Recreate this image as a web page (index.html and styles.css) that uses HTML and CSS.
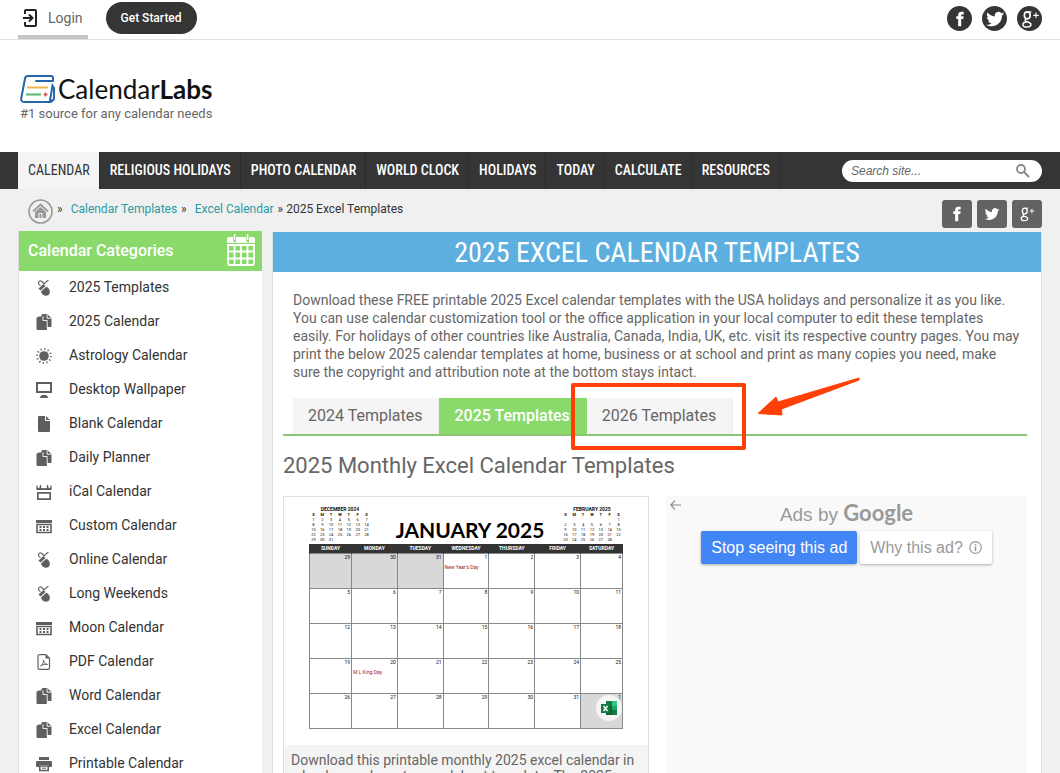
FILE: index.html
```html
<!DOCTYPE html>
<html lang="en">
<head>
  <meta charset="utf-8">
  <meta name="viewport" content="width=device-width, initial-scale=1">
  <title>2025 Excel Calendar Templates - CalendarLabs</title>
  <link rel="stylesheet" href="styles.css">
</head>
<body>
  <!-- icon sprite -->
  <svg class="sprite" aria-hidden="true">
    <symbol id="i-mouse" viewBox="0 0 16 16">
      <path d="M4.500 5.500C2 5 2 1.500 4 1s2.500 2 4 2.500 2-3 4.500-3" fill="none" stroke="#5f5f5f" stroke-width="1.200"/>
      <path d="M2.500 8.500l5-4.500 2 2-5 4.500z" fill="#5f5f5f"/>
      <path d="M5 11.500l5.200-4.800c2.300.8 4 3 3.600 5.800-.4 2.300-2.300 3.500-4.300 3.300C7.300 15.500 5.500 13.800 5 11.500z" fill="#5f5f5f"/>
    </symbol>
    <symbol id="i-docs" viewBox="0 0 16 16">
      <path d="M5 2l1.500-2H11l4.500 4v8q0 1-1 1H10z" fill="#5f5f5f"/>
      <path d="M3 2.500h4l4 4V15q0 1-1 1H1.500q-1 0-1-1V4.500q0-1 1-1.500z" fill="#5f5f5f"/>
      <path d="M7 2.300v4.200h4.200V14M11 .5v3.700h4.500" fill="none" stroke="#fff" stroke-width=".9"/>
    </symbol>
    <symbol id="i-sun" viewBox="0 0 16 16">
      <circle cx="8" cy="8" r="4.800" fill="#5f5f5f"/>
      <circle cx="8" cy="8" r="7" fill="none" stroke="#5f5f5f" stroke-width="2" stroke-dasharray="1.200 2.465"/>
    </symbol>
    <symbol id="i-screen" viewBox="0 0 16 16">
      <path d="M1 1h14v9H1z" fill="none" stroke="#5f5f5f" stroke-width="2"/>
      <path d="M6 13h4l2 2v1H4v-1z" fill="#5f5f5f"/>
    </symbol>
    <symbol id="i-page" viewBox="0 0 16 16">
      <path d="M3 0h7l4 4v11q0 1-1 1H3q-1 0-1-1V1q0-1 1-1z" fill="#5f5f5f"/>
      <path d="M9.500 0v4.500H14" fill="none" stroke="#fff" stroke-width="1"/>
    </symbol>
    <symbol id="i-ical" viewBox="0 0 16 16">
      <path d="M1 1.500V5h14V1.500M4.500 1v3M11.500 1v3" fill="none" stroke="#5f5f5f" stroke-width="1.300"/>
      <path d="M1 5l3-2 2 1.500h4L12 3l3 2v1H1z" fill="#5f5f5f"/>
      <path d="M1.800 8.800h12.400v6.400H1.800z" fill="none" stroke="#5f5f5f" stroke-width="1.700"/>
    </symbol>
    <symbol id="i-grid" viewBox="0 0 16 16">
      <path d="M0 2h16v3H0z" fill="#5f5f5f"/>
      <path d="M1 6.500h14v8H1z" fill="none" stroke="#5f5f5f" stroke-width="1.600"/>
      <path d="M3.500 9h9M3.500 12h9" stroke="#5f5f5f" stroke-width="2" stroke-dasharray="2 1.500"/>
    </symbol>
    <symbol id="i-pdf" viewBox="0 0 16 16">
      <path d="M3 .7h7l3.500 3.500V14q0 1.300-1.300 1.300H3.500Q2 15.300 2 14V2Q2 .7 3.300 .7z" fill="none" stroke="#5f5f5f" stroke-width="1.200"/>
      <path d="M9.500 1v3.500h4z" fill="#5f5f5f"/>
      <path d="M4.500 12c2-1 3-3.500 3-6 0 2.500 1.500 4 4 4.500-2.500-.5-5 0-7 1.500z" fill="none" stroke="#5f5f5f" stroke-width="1"/>
    </symbol>
    <symbol id="i-print" viewBox="0 0 16 16">
      <path d="M3 1h10v3H3zM1 5h14q1 0 1 1v4q0 1-1 1h-2V9H3v2H1q-1 0-1-1V6q0-1 1-1z" fill="#5f5f5f"/>
      <path d="M3.800 10h8.400v4.500H3.800z" fill="none" stroke="#5f5f5f" stroke-width="1.600"/>
      <path d="M6 12.200h4" stroke="#5f5f5f"/>
    </symbol>
    <symbol id="i-fb" viewBox="0 0 24 24">
      <path d="M10 20v-8H8V9h2V7.500C10 5 11.300 4 13.500 4H16v3h-1.500C13.500 7 13.300 7.500 13.300 8.200V9H16l-.4 3h-2.300v8z" fill="#fff"/>
    </symbol>
    <symbol id="i-tw" viewBox="0 0 24 24">
      <path d="M22 6.200c-.8.300-1.500.5-2.300.6.800-.5 1.500-1.300 1.700-2.200-.8.500-1.600.8-2.500 1a4 4 0 0 0-6.900 3.700C8.700 9.100 5.700 7.500 3.700 5c-1 1.800-.6 4.100 1.200 5.300-.6 0-1.200-.2-1.800-.5 0 1.900 1.400 3.600 3.200 4-.6.200-1.200.2-1.800.1.500 1.600 2 2.700 3.700 2.700-1.600 1.300-3.700 1.900-5.900 1.600 7.700 4.500 17.400-.4 17.400-9.900.9-.6 1.700-1.300 2.300-2.100z" fill="#fff"/>
    </symbol>
    <symbol id="i-gp" viewBox="0 0 24 24">
      <path d="M13.500 4.300H9.500" stroke="#fff" stroke-width="1.400"/>
      <ellipse cx="9" cy="8" rx="3.200" ry="3.800" fill="none" stroke="#fff" stroke-width="1.800"/>
      <path d="M8 12c-2 1-1.500 2.300 0 2.800 2 .6 5 1 5 3.200 0 1.900-2 2.800-4.500 2.800s-4.300-.9-4.300-2.600 2-3 4.500-3" fill="none" stroke="#fff" stroke-width="1.600"/>
      <path d="M15.500 8h6M18.500 5v6" stroke="#fff" stroke-width="1.200"/>
    </symbol>
  </svg>

  <div class="page">
    <header class="top-bar">
      <a class="login" href="#">
        <svg width="15" height="18" viewBox="0 0 15 18" aria-hidden="true">
          <path d="M2 5V2q0-1 1-1h9q1 0 1 1v14q0 1-1 1H3q-1 0-1-1v-3M0 9h9M6 5.500L9.500 9 6 12.500" fill="none" stroke="#222" stroke-width="2"/>
        </svg>
        Login
      </a>
      <a class="get-started" href="#">Get Started</a>
      <div class="round-social">
        <a href="#" aria-label="Facebook"><svg><use href="#i-fb"/></svg></a>
        <a href="#" aria-label="Twitter"><svg><use href="#i-tw"/></svg></a>
        <a href="#" aria-label="Google Plus"><svg><use href="#i-gp"/></svg></a>
      </div>
    </header>

    <div class="brand">
      <a class="logo" href="#">
        <svg width="36" height="28" viewBox="0 0 36 28" aria-hidden="true">
          <path d="M33 6.500V3q0-2-2-2H8Q5.500 1 5 3.500L1.300 23q-.6 4 3 4H30q2 0 2.500-2" fill="none" stroke="#2467ab" stroke-width="2"/>
          <path d="M33 6H16M32.500 10.500L30 25.500q4 .5 4-2V13z" fill="none" stroke="#2467ab" stroke-width="2" stroke-linecap="round"/>
          <path d="M7 12.500h21" stroke="#f0b44a" stroke-width="2"/>
          <path d="M6 19.500h15" stroke="#55b374" stroke-width="2"/>
          <path d="M23.500 19.500h4M25.500 17.500v4" stroke="#e5483a" stroke-width="1.500"/>
        </svg>
        <span>Calendar<b>Labs</b></span>
      </a>
      <p class="tagline">#1 source for any calendar needs</p>
    </div>

    <nav class="main-nav">
      <ul>
        <li><a class="active" href="#">CALENDAR</a></li>
        <li><a href="#">RELIGIOUS HOLIDAYS</a></li>
        <li><a href="#">PHOTO CALENDAR</a></li>
        <li><a href="#">WORLD CLOCK</a></li>
        <li><a href="#">HOLIDAYS</a></li>
        <li><a href="#">TODAY</a></li>
        <li><a href="#">CALCULATE</a></li>
        <li><a href="#">RESOURCES</a></li>
      </ul>
      <form class="search">
        <input type="text" placeholder="Search site..." aria-label="Search site">
        <button type="button" aria-label="Search">
          <svg width="14" height="14" viewBox="0 0 14 14"><circle cx="5" cy="5" r="4" fill="none" stroke="#888" stroke-width="1.800"/><path d="M8 8l5 5" stroke="#888" stroke-width="2"/></svg>
        </button>
      </form>
    </nav>

    <div class="crumb-bar">
      <div class="crumbs">
        <a class="home" href="#" aria-label="Home">
          <svg width="25" height="25" viewBox="0 0 25 25"><circle cx="12.500" cy="12.500" r="11.500" fill="none" stroke="#999" stroke-width="1.600"/><path d="M5 12.500l7.500-7 7.500 7" fill="none" stroke="#999" stroke-width="1.800"/><path d="M7 13l5.500-5 5.500 5v6h-3.500v-5h-4v5H7zM11.500 15h2v4h-2z" fill="#999"/></svg>
        </a>
        <span>»</span>
        <a href="#">Calendar Templates</a>
        <span>»</span>
        <a href="#">Excel Calendar</a>
        <span>» 2025 Excel Templates</span>
      </div>
      <div class="square-social">
        <a href="#" aria-label="Facebook"><svg><use href="#i-fb"/></svg></a>
        <a href="#" aria-label="Twitter"><svg><use href="#i-tw"/></svg></a>
        <a href="#" aria-label="Google Plus"><svg><use href="#i-gp"/></svg></a>
      </div>
    </div>

    <div class="columns">
      <aside class="sidebar">
        <h2>Calendar Categories
          <svg width="28" height="32" viewBox="0 0 28 32" aria-hidden="true">
            <path d="M0 9V5q0-2 2-2h24q2 0 2 2v4z" fill="#fff"/>
            <path d="M7.500 1v4q0 2 1.500 2M20.500 1v4q0 2 1.500 2" fill="none" stroke="#8ad96b" stroke-width="3"/>
            <path d="M7.500 0v6M20.500 0v6" stroke="#fff" stroke-width="1.600"/>
            <path d="M1 11h26v18q0 2-2 2H3q-2 0-2-2zM7.500 11v20M14 11v20M20.500 11v20M1 17.500h26M1 24.500h26" fill="none" stroke="#fff" stroke-width="1.800"/>
          </svg>
        </h2>
        <ul>
          <li><a href="#"><svg><use href="#i-mouse"/></svg>2025 Templates</a></li>
          <li><a href="#"><svg><use href="#i-docs"/></svg>2025 Calendar</a></li>
          <li><a href="#"><svg><use href="#i-sun"/></svg>Astrology Calendar</a></li>
          <li><a href="#"><svg><use href="#i-screen"/></svg>Desktop Wallpaper</a></li>
          <li><a href="#"><svg><use href="#i-page"/></svg>Blank Calendar</a></li>
          <li><a href="#"><svg><use href="#i-docs"/></svg>Daily Planner</a></li>
          <li><a href="#"><svg><use href="#i-ical"/></svg>iCal Calendar</a></li>
          <li><a href="#"><svg><use href="#i-grid"/></svg>Custom Calendar</a></li>
          <li><a href="#"><svg><use href="#i-mouse"/></svg>Online Calendar</a></li>
          <li><a href="#"><svg><use href="#i-mouse"/></svg>Long Weekends</a></li>
          <li><a href="#"><svg><use href="#i-grid"/></svg>Moon Calendar</a></li>
          <li><a href="#"><svg><use href="#i-pdf"/></svg>PDF Calendar</a></li>
          <li><a href="#"><svg><use href="#i-docs"/></svg>Word Calendar</a></li>
          <li><a href="#"><svg><use href="#i-docs"/></svg>Excel Calendar</a></li>
          <li><a href="#"><svg><use href="#i-print"/></svg>Printable Calendar</a></li>
        </ul>
      </aside>

      <main class="content">
        <h1>2025 EXCEL CALENDAR TEMPLATES</h1>
        <p class="intro">Download these FREE printable 2025 Excel calendar templates with the USA holidays and personalize it as you like. You can use calendar customization tool or the office application in your local computer to edit these templates easily. For holidays of other countries like Australia, Canada, India, UK, etc. visit its respective country pages. You may print the below 2025 calendar templates at home, business or at school and print as many copies you need, make sure the copyright and attribution note at the bottom stays intact.</p>

        <div class="tabs">
          <a href="#">2024 Templates</a>
          <a class="active" href="#">2025 Templates</a>
          <a href="#">2026 Templates
            <span class="highlight"></span>
            <svg class="arrow" width="104" height="40" viewBox="0 0 104 40" aria-hidden="true"><path d="M102 1L21 25 19 20 1 36.500 25 38 24.500 32 102 3z" fill="#ff4006" stroke="#ff4006" stroke-linejoin="round"/></svg>
          </a>
        </div>

        <h2>2025 Monthly Excel Calendar Templates</h2>

        <div class="cards">
          <article class="card">
            <div class="sheet">
              <div class="sheet-head">
                <table class="mini">
                  <caption>DECEMBER 2024</caption>
                  <tr><th>S</th><th>M</th><th>T</th><th>W</th><th>T</th><th>F</th><th>S</th></tr>
                  <tr><td>1</td><td>2</td><td>3</td><td>4</td><td>5</td><td>6</td><td>7</td></tr>
                  <tr><td>8</td><td>9</td><td>10</td><td>11</td><td>12</td><td>13</td><td>14</td></tr>
                  <tr><td>15</td><td>16</td><td>17</td><td>18</td><td>19</td><td>20</td><td>21</td></tr>
                  <tr><td>22</td><td>23</td><td>24</td><td>25</td><td>26</td><td>27</td><td>28</td></tr>
                  <tr><td>29</td><td>30</td><td>31</td><td></td><td></td><td></td><td></td></tr>
                </table>
                <h3>JANUARY 2025</h3>
                <table class="mini">
                  <caption>FEBRUARY 2025</caption>
                  <tr><th>S</th><th>M</th><th>T</th><th>W</th><th>T</th><th>F</th><th>S</th></tr>
                  <tr><td></td><td></td><td></td><td></td><td></td><td></td><td>1</td></tr>
                  <tr><td>2</td><td>3</td><td>4</td><td>5</td><td>6</td><td>7</td><td>8</td></tr>
                  <tr><td>9</td><td>10</td><td>11</td><td>12</td><td>13</td><td>14</td><td>15</td></tr>
                  <tr><td>16</td><td>17</td><td>18</td><td>19</td><td>20</td><td>21</td><td>22</td></tr>
                  <tr><td>23</td><td>24</td><td>25</td><td>26</td><td>27</td><td>28</td><td></td></tr>
                </table>
              </div>
              <table class="month">
                <tr><th>SUNDAY</th><th>MONDAY</th><th>TUESDAY</th><th>WEDNESDAY</th><th>THURSDAY</th><th>FRIDAY</th><th>SATURDAY</th></tr>
                <tr><td class="out">29</td><td class="out">30</td><td class="out">31</td><td>1<span>New Year's Day</span></td><td>2</td><td>3</td><td>4</td></tr>
                <tr><td>5</td><td>6</td><td>7</td><td>8</td><td>9</td><td>10</td><td>11</td></tr>
                <tr><td>12</td><td>13</td><td>14</td><td>15</td><td>16</td><td>17</td><td>18</td></tr>
                <tr><td>19</td><td>20<span>M L King Day</span></td><td>21</td><td>22</td><td>23</td><td>24</td><td>25</td></tr>
                <tr><td>26</td><td>27</td><td>28</td><td>29</td><td>30</td><td>31</td><td class="out">1</td></tr>
              </table>
              <a class="excel-badge" href="#" aria-label="Download Excel file">
                <svg width="16" height="14" viewBox="0 0 16 14"><path d="M5 0h11v14H5z" fill="#21a366"/><path d="M5 0h6v5H5z" fill="#107c41"/><path d="M11 0h5v5h-5z" fill="#33c481"/><path d="M5 5h6v9H5z" fill="#185c37"/><path d="M11 9h5v5h-5z" fill="#107c41"/><path d="M0 3h9v9H0z" fill="#107c41"/><path d="M2.500 5l4 5M6.500 5l-4 5" stroke="#fff" stroke-width="1.400"/></svg>
              </a>
            </div>
            <p>Download this printable monthly 2025 excel calendar in a landscape layout spreadsheet template. The 2025</p>
          </article>

          <section class="ad">
            <button class="back" type="button" aria-label="Back">
              <svg width="11" height="10" viewBox="0 0 11 10"><path d="M11 5H1M5 .7L.8 5 5 9.300" fill="none" stroke="#888" stroke-width="1.200"/></svg>
            </button>
            <p class="ads-by">Ads by <b>Google</b></p>
            <div class="ad-buttons">
              <button class="stop" type="button">Stop seeing this ad</button>
              <button class="why" type="button">Why this ad?
                <svg width="13" height="13" viewBox="0 0 13 13"><circle cx="6.500" cy="6.500" r="5.800" fill="none" stroke="#999" stroke-width="1.200"/><path d="M6.500 5.500V10M6.500 3v1.500" stroke="#999" stroke-width="1.500"/></svg>
              </button>
            </div>
          </section>
        </div>
      </main>
    </div>
  </div>
</body>
</html>
```
FILE: styles.css
```css
:root {
  --green: #8ad96b;
  --blue: #5dafe0;
  --dark: #353535;
  --gray: #666;
  --link: #2a9ba5;
  --mark: #ff4006;
  --gutter: 18px;
  --condensed: "Roboto Condensed", "Liberation Sans Narrow", Roboto, sans-serif;
}

* {
  box-sizing: border-box;
}

body {
  margin: 0;
  background: #f0f0f0;
  font-family: Roboto, sans-serif;
  font-size: 14px;
  color: var(--gray);
}

a {
  color: inherit;
  text-decoration: none;
}

ul {
  list-style: none;
  margin: 0;
  padding: 0;
}

h1, h2, h3, p {
  margin: 0;
  font-weight: 400;
}

button {
  border: 0;
  padding: 0;
  background: none;
  font: inherit;
  color: inherit;
  cursor: pointer;
}

.sprite {
  display: none;
}

.page {
  height: 100vh;
  overflow: hidden;
}

/* Top bar */
.top-bar {
  display: flex;
  align-items: flex-start;
  height: 40px;
  padding: 0 var(--gutter);
  background: #fff;
  border-bottom: 1px solid #e0e0e0;
}

.login {
  display: flex;
  align-items: center;
  gap: 10px;
  height: 39px;
  padding: 0 5px;
  border-bottom: 4px solid #c5c5c5;
}

.get-started {
  margin: 2px 0 0 18px;
  padding: 0 15px;
  border-radius: 16px;
  background: var(--dark);
  color: #fff;
  font-size: 12px;
  font-weight: 500;
  line-height: 32px;
}

.round-social {
  display: flex;
  gap: 10px;
  margin: 6px 0 0 auto;
}

.round-social a {
  display: flex;
  align-items: center;
  justify-content: center;
  width: 25px;
  height: 25px;
  border-radius: 50%;
  background: var(--dark);
}

.round-social svg {
  width: 22px;
  height: 22px;
}

/* Logo */
.brand {
  height: 112px;
  padding: 33px 20px 0;
  background: #fff;
}

.logo {
  display: flex;
  align-items: center;
  gap: 2px;
  height: 32px;
  color: #111;
  font-family: Lato, sans-serif;
  font-size: 26px;
  line-height: 28px;
}

.tagline {
  font-size: 13px;
  line-height: 18px;
}

/* Navigation */
.main-nav {
  display: flex;
  align-items: center;
  justify-content: space-between;
  height: 37px;
  padding: 0 var(--gutter);
  background: var(--dark);
}

.main-nav ul {
  display: flex;
}

.main-nav ul a {
  display: block;
  padding: 0 9px 0 10px;
  border-right: 1px solid #2b2b2b;
  color: #fff;
  font-family: var(--condensed);
  font-size: 14px;
  font-weight: 500;
  line-height: 37px;
}

.main-nav ul .active {
  background: #f4f4f4;
  color: #333;
  font-weight: 400;
}

.search {
  display: flex;
  align-items: center;
  width: 200px;
  height: 22px;
  padding: 0 12px 0 9px;
  border-radius: 11px;
  background: #fff;
}

.search input {
  flex: 1;
  min-width: 0;
  border: 0;
  padding: 0;
  outline: 0;
  background: none;
  font: italic 12px "Liberation Sans", Arial, sans-serif;
}

.search input::placeholder {
  color: #666;
}

.search button {
  display: flex;
}

/* Breadcrumbs */
.crumb-bar {
  display: flex;
  justify-content: space-between;
  height: 42px;
  padding: 10px var(--gutter) 0;
}

.crumbs {
  display: flex;
  gap: 4px;
  padding-left: 10px;
  color: #333;
  font-size: 12px;
  line-height: 20px;
}

.crumbs a {
  color: var(--link);
}

.crumbs span + a {
  margin-left: 4px;
}

.square-social {
  display: flex;
  gap: 5px;
}

.square-social a {
  display: flex;
  align-items: center;
  justify-content: center;
  width: 30px;
  height: 28px;
  margin-top: 1px;
  border-radius: 3px;
  background: #636363;
}

.square-social svg {
  width: 18px;
  height: 18px;
}

.square-social a:first-child svg {
  width: 22px;
  height: 22px;
}

/* Columns */
.columns {
  display: flex;
  gap: 10px;
  padding: 0 var(--gutter);
}

.sidebar {
  flex: 0 0 244px;
  border-left: 1px solid #e0e0e0;
  background: #fff;
}

.sidebar h2 {
  display: flex;
  align-items: center;
  justify-content: space-between;
  height: 40px;
  padding: 0 7px 2px 9px;
  background: var(--green);
  color: #fff;
  font-size: 16px;
  font-weight: 500;
}

.sidebar li a {
  display: flex;
  align-items: center;
  gap: 17px;
  height: 34px;
  padding: 0 0 2px 17px;
  color: #333;
}

.sidebar li svg {
  width: 16px;
  height: 16px;
  margin-top: 2px;
}

.content {
  flex: 1;
  min-width: 0;
  margin-top: 1px;
  border: 1px solid #e0e0e0;
  border-top: 0;
  background: #fff;
}

h1 {
  background: var(--blue);
  color: #fff;
  font-family: var(--condensed);
  font-size: 28px;
  line-height: 41px;
  height: 40px;
  text-align: center;
}

.intro {
  padding: 19px 17px 0 20px;
  line-height: 18px;
}

.tabs {
  display: flex;
  margin: 17px 14px 0 10px;
  padding-left: 10px;
  border-bottom: 2px solid #8ac675;
}

.tabs a {
  position: relative;
  padding: 0 16px 0 15px;
  border-right: 1px solid #eee;
  background: #f5f5f5;
  font-size: 16px;
  line-height: 36px;
}

.tabs .active {
  border-color: var(--green);
  background: var(--green);
  color: #fff;
  font-weight: 500;
}

/* Callout drawn over the last tab */
.highlight {
  position: absolute;
  inset: -15px -14px -16px -16px;
  border: 4px solid var(--mark);
  border-radius: 2px;
}

.arrow {
  position: absolute;
  top: -21px;
  left: 100%;
  margin-left: 25px;
}

.content h2 {
  padding: 16px 10px;
  font-size: 22px;
  line-height: 28px;
}

.cards {
  display: grid;
  grid-template-columns: 366fr 361fr;
  gap: 17px;
  padding: 0 14px 0 10px;
}

.card {
  border: 1px solid #e0e0e0;
}

.card > p {
  padding: 7px;
  background: #f4f4f4;
  line-height: 16px;
}

/* Calendar preview */
.sheet {
  position: relative;
  height: 248px;
  padding: 10px 25px;
  color: #111;
}

.sheet-head {
  display: flex;
  align-items: flex-start;
  justify-content: space-between;
  height: 37px;
}

.sheet h3 {
  padding: 9px 0 0 8px;
  color: #000;
  font-family: Lato, sans-serif;
  font-size: 21px;
  font-weight: 700;
  line-height: 28px;
}

.mini {
  width: 62px;
  border-collapse: collapse;
  font-size: 4px;
  line-height: 5px;
  text-align: center;
}

.mini caption {
  font-size: 5px;
  font-weight: 700;
}

.mini th,
.mini td {
  height: 5px;
  padding: 0;
}

.month {
  width: 100%;
  table-layout: fixed;
  border-collapse: collapse;
  font-size: 5px;
  line-height: 5px;
}

.month th {
  height: 9px;
  padding: 0;
  border: 1px solid #333;
  border-width: 0 1px;
  background: #333;
  color: #fff;
}

.month th:first-child,
.month th:last-child {
  width: 42px;
}

.month td {
  height: 35px;
  padding: 1px;
  border: 1px solid #888;
  text-align: right;
  vertical-align: top;
}

.month span {
  display: block;
  padding-top: 5px;
  color: #a02030;
  text-align: left;
  white-space: nowrap;
}

.month .out {
  background: #d8d8d8;
}

.excel-badge {
  position: absolute;
  right: 26px;
  bottom: 24px;
  display: flex;
  align-items: center;
  justify-content: center;
  width: 26px;
  height: 26px;
  border-radius: 50%;
  background: #f4f4f4;
}

/* Ad */
.ad {
  display: grid;
  grid-template-rows: auto auto 1fr;
  justify-items: center;
  position: relative;
  background: #f9f9f9;
  color: #999;
  font-family: "Liberation Sans", Arial, sans-serif;
}

.back {
  position: absolute;
  top: 4px;
  left: 4px;
  line-height: 0;
}

.ads-by {
  font-size: 19px;
  line-height: 33px;
}

.ads-by b {
  font-family: Lato, sans-serif;
  font-size: 22px;
}

.ad-buttons {
  display: flex;
  gap: 3px;
  font-size: 16px;
}

.ad-buttons button {
  height: 33px;
  padding: 0 10px;
  border-radius: 2px;
  box-shadow: 0 1px 3px rgba(0, 0, 0, 0.3);
}

.stop {
  background: #4285f4;
  color: #fff;
}

.why {
  display: flex;
  align-items: center;
  gap: 6px;
  background: #fff;
}
```
